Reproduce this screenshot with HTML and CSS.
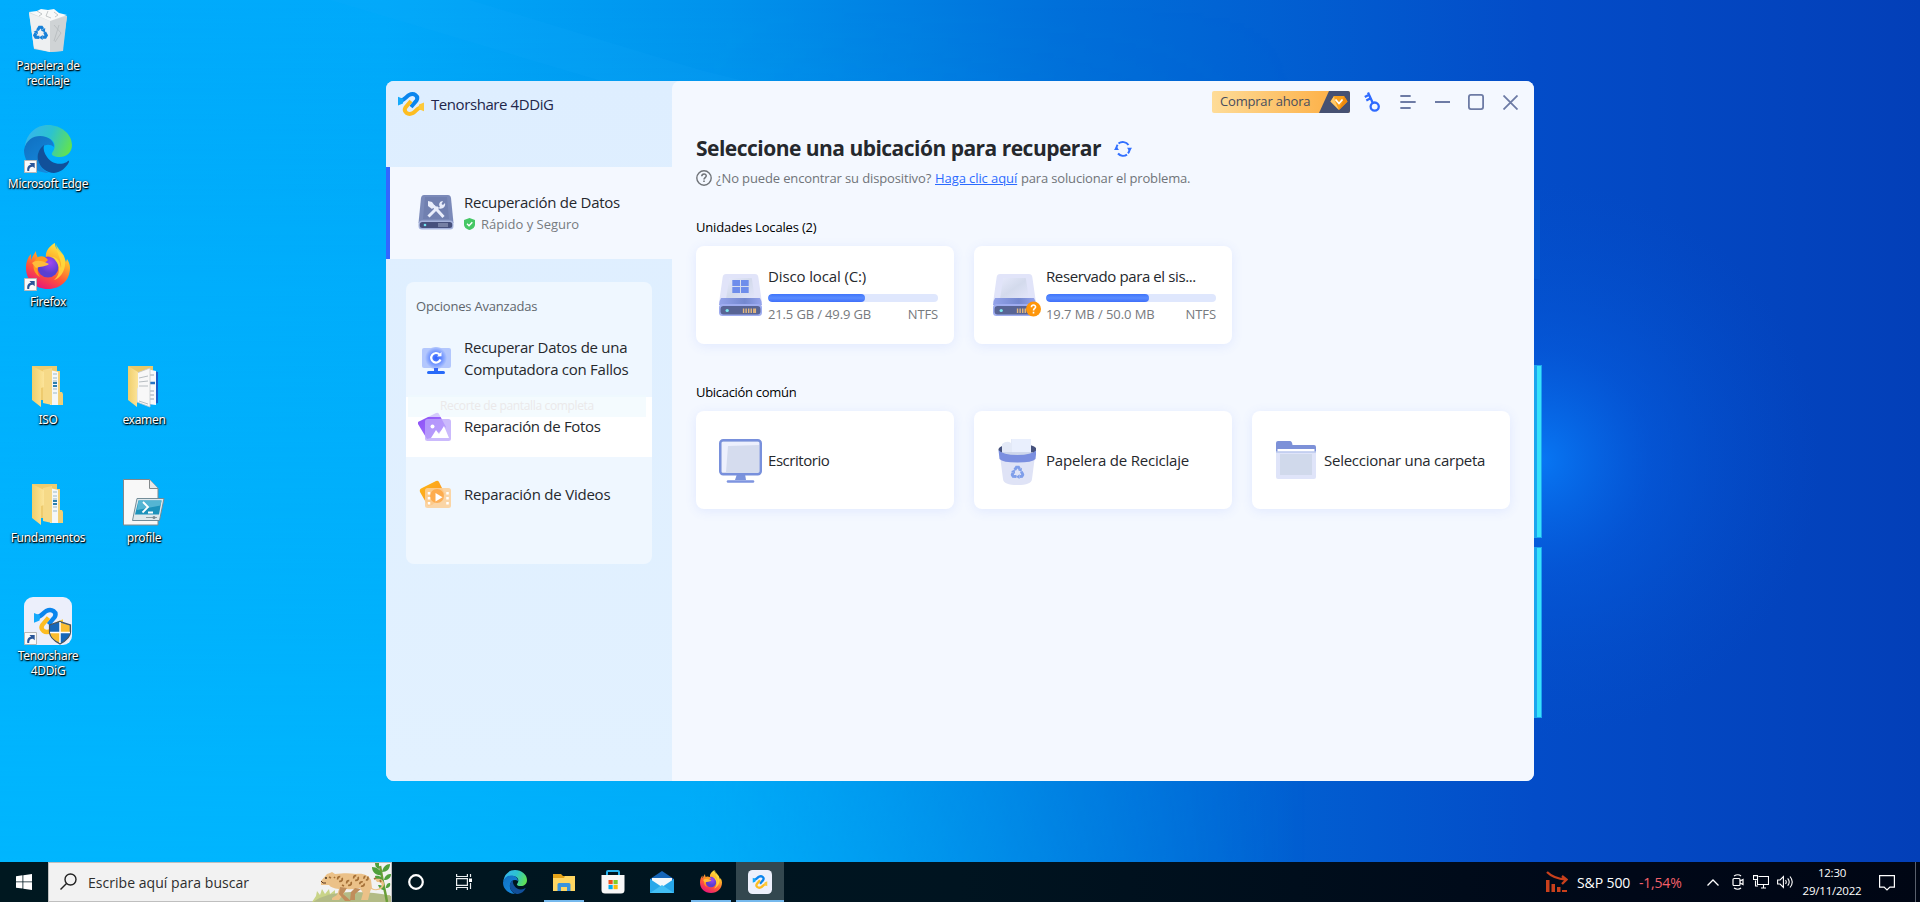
FILE: index.html
```html
<!DOCTYPE html>
<html lang="es">
<head>
<meta charset="utf-8">
<title>Escritorio</title>
<link rel="stylesheet" href="styles.css">
</head>
<body>
<svg class="defs" width="0" height="0" aria-hidden="true">
  <defs>
    <linearGradient id="edgeTop" x1="0" y1="0.3" x2="1" y2="0.6"><stop offset="0" stop-color="#36b5ef"/><stop offset=".5" stop-color="#2cc3cf"/><stop offset="1" stop-color="#62e250"/></linearGradient>
    <linearGradient id="edgeMid" x1="0" y1="0" x2=".6" y2="1"><stop offset="0" stop-color="#0f6fc0"/><stop offset="1" stop-color="#1688dc"/></linearGradient>
    <linearGradient id="ffBody" x1=".8" y1="0" x2=".3" y2="1"><stop offset="0" stop-color="#fff04a"/><stop offset=".35" stop-color="#ffb02a"/><stop offset=".65" stop-color="#ff5a36"/><stop offset="1" stop-color="#e8127c"/></linearGradient>
    <radialGradient id="ffGlobe" cx=".6" cy=".3"><stop offset="0" stop-color="#a048f0"/><stop offset="1" stop-color="#5a3fd0"/></radialGradient>
    <linearGradient id="fold" x1="0" x2="1"><stop offset="0" stop-color="#f0cf6c"/><stop offset="1" stop-color="#fce49a"/></linearGradient>
    <linearGradient id="drvTop" x1="0" y1="0" x2="1" y2="1"><stop offset="0" stop-color="#e6e9fb"/><stop offset=".5" stop-color="#d3daec"/><stop offset="1" stop-color="#e2e5fa"/></linearGradient>
    <linearGradient id="drvMid" x1="0" x2="1"><stop offset="0" stop-color="#94a3ea"/><stop offset=".6" stop-color="#7488cf"/><stop offset="1" stop-color="#96a4ec"/></linearGradient>
    <linearGradient id="violet" x1="0" y1="0" x2="1" y2="1"><stop offset="0" stop-color="#8a4df5"/><stop offset="1" stop-color="#a878ff"/></linearGradient>
    <linearGradient id="orange" x1="0" y1="0" x2="1" y2="1"><stop offset="0" stop-color="#fdb913"/><stop offset="1" stop-color="#fd8f2c"/></linearGradient>
    <radialGradient id="pcGlow"><stop offset="0" stop-color="#2f62ff"/><stop offset=".45" stop-color="#5e86ff"/><stop offset="1" stop-color="#b3c7fd"/></radialGradient>

    <symbol id="edge" viewBox="0 0 48 48">
      <path d="M1 22C2 9 12 0 24 0c13 0 24 9 24 20 0 8-6 12-12 12-6 0-9-2-8-4 3-4 3-7 2-10C27 11 10 8 1 22z" fill="url(#edgeTop)"/>
      <path d="M0 25C2 15 9 11 16 11c9 0 14 5 14 11-6-5-15-1-16 8-1 8 4 15 11 18C12 48 0 39 0 25z" fill="url(#edgeMid)"/>
      <path d="M20 20c-6 4-7 11-6 15 2 8 9 13 16 13 7-1 12-5 15-11 0-2-1-1-2 0-8 4-16 1-20-5-3-4-4-8-3-12z" fill="#11509a"/>
    </symbol>
    <symbol id="firefox" viewBox="0 0 48 48">
      <path d="M46 25c0 12-9 21-22 21S2 37 2 25c0-6 2-11 5-14v6c1-3 3-6 5-9 0 3 1 5 2 7l8-1c-1-5 3-11 9-14 0 5 3 8 7 11 2 2 3 5 4 8l1-3c2 3 3 6 3 9z" fill="url(#ffBody)"/>
      <circle cx="24" cy="24" r="10.500" fill="url(#ffGlobe)"/>
      <path d="M14 14c4-2 8 0 10 3l-1 1c-2 2-7 2-9 6-1 4 0 7 2 10-6-3-10-13-2-20z" fill="#ff9a1f"/>
      <path d="M8 20c4-3 9-3 17 1-3 3-9 2-13 4z" fill="#ffbd3a"/>
      <path d="M26 14c5-1 9 3 10 7l1 4c1-9-4-12-5-24 1 4 6 8 8 12 4 12-3 22-10 24 7-6 6-14 1-20-1-2-3-3-5-3z" fill="#ffdc3d" opacity=".85"/>
    </symbol>
    <symbol id="loop" viewBox="0 0 26 24">
      <path d="M1.500 8.300C6 9.500 8 4.500 11 3c5-2.500 10 1 7.500 5.500L13 15" fill="none" stroke="#0a85ee" stroke-width="4"/>
      <path d="M0 4.800 5.500 7 5 11.500 0 13.500z" fill="#14a9fb"/>
      <path d="M24.500 15.700C20 14.500 18 19.500 15 21c-5 2.500-10-1-7.500-5.500L13 9" fill="none" stroke="#fdbd22" stroke-width="4"/>
      <path d="M26 19.200 20.500 17l.5-4.500 5-2z" fill="#fdc93a"/>
    </symbol>
    <symbol id="shortcut" viewBox="0 0 13 13">
      <path d="M.5.500h12v12H.5z" fill="#fafafa" stroke="#b8b8b8"/>
      <path d="M3.300 11C2.800 7 4.500 5 7 4.800L5.500 3h5.200v5.200L9 6.700C6.500 6.500 5 8 5.200 11z" fill="#2a5699"/>
    </symbol>
    <symbol id="recycle" viewBox="0 0 20 20">
      <g fill="none" stroke="currentColor" stroke-width="4.200">
        <path d="M6 7 8.600 3h2.800l1.600 2.600"/>
        <path d="M6 7 8.600 3h2.800l1.600 2.600" transform="rotate(120 10 11)"/>
        <path d="M6 7 8.600 3h2.800l1.600 2.600" transform="rotate(240 10 11)"/>
      </g>
      <g fill="currentColor">
        <path d="m10.500 7.200 5.800-3.200-.4 6z"/>
        <path d="m10.500 7.200 5.800-3.200-.4 6z" transform="rotate(120 10 11)"/>
        <path d="m10.500 7.200 5.800-3.200-.4 6z" transform="rotate(240 10 11)"/>
      </g>
    </symbol>
    <symbol id="folder" viewBox="0 0 48 48">
      <path d="M8 5h25v34H12z" fill="#eecb6e"/>
      <path d="M28 10h8v24l3 2v8h-9z" fill="#f3d27a"/>
      <path d="m26 9 8 2v33h-8z" fill="#f4f7f8"/>
      <path d="M29 13h4m-4 4h4m-4 3h4m-4 8h4m-4 4h4" stroke="#9bb9c8"/>
      <path d="M29 22h4m-4 3h4" stroke="#2b7fae" stroke-width="2"/>
      <path d="m19 9 9-2v37l-9-2z" fill="#f6d987"/>
      <path d="m8 5 12 6v15l-3 1v19L8 39z" fill="url(#fold)"/>
      <path d="M36 31h2l1 2v11h-4V33z" fill="#f1cf76"/>
    </symbol>
    <symbol id="drive" viewBox="0 0 42 42">
      <path d="M7 0h28q3 0 3.400 3L42 29H0L3.600 3Q4 0 7 0z" fill="#e1e4f9"/>
      <path d="M10 4h22l3 20H7z" fill="url(#drvTop)"/>
      <path d="M2 24h38q2 3 2 7H0q0-4 2-7z" fill="url(#drvMid)"/>
      <rect y="30" width="42" height="12" rx="3.500" fill="#9eacef"/>
      <rect x="1.500" y="32" width="39" height="8.500" rx="3" fill="#586494"/>
      <circle cx="8" cy="36.500" r="1.600" fill="#7ce8ee"/>
      <path d="M24 34.500v4.500m2.500-4.500v4.500m2.500-4.500v4.500m2.500-4.500v4.500m2.500-4.500v4.500m1.500-4.500v4.500" stroke="#e3b77e" stroke-width="1.400"/>
    </symbol>
  </defs>
</svg>

<div class="screen">
  <svg class="wallpaper" viewBox="0 0 1920 902" preserveAspectRatio="none" aria-hidden="true">
    <defs>
      <linearGradient id="wpBase" x1="0" y1="0" x2="1" y2="0">
        <stop offset="0" stop-color="#00adfd"/><stop offset=".2" stop-color="#00a9fa"/><stop offset=".38" stop-color="#0092ec"/><stop offset=".55" stop-color="#0070da"/><stop offset=".8" stop-color="#034cc8"/><stop offset="1" stop-color="#033fb8"/>
      </linearGradient>
      <linearGradient id="wpLow" x1="0" y1="0" x2="0" y2="1">
        <stop offset="0" stop-color="#00baff" stop-opacity="0"/><stop offset="1" stop-color="#00baff" stop-opacity=".7"/>
      </linearGradient>
      <linearGradient id="wpMaskG" x1="0" y1="0" x2="1" y2="0"><stop offset="0" stop-color="#fff"/><stop offset=".36" stop-color="#fff"/><stop offset=".68" stop-color="#000"/></linearGradient>
      <mask id="wpMask"><path d="M0 0h1920v902H0z" fill="url(#wpMaskG)"/></mask>
      <radialGradient id="wpGlow" gradientUnits="userSpaceOnUse" cx="1540" cy="460" r="280"><stop offset="0" stop-color="#0879f6" stop-opacity=".95"/><stop offset=".4" stop-color="#065fe2" stop-opacity=".5"/><stop offset="1" stop-color="#0450cc" stop-opacity="0"/></radialGradient>
    </defs>
    <path d="M0 0h1920v902H0z" fill="url(#wpBase)"/>
    <path d="M0 0h1920v902H0z" fill="url(#wpLow)" mask="url(#wpMask)"/>
    <path d="M330 0 1000 200h540v80L700 70 470 0z" fill="#1bb0ff" opacity=".1"/>
    <path d="M1534 0h386v902h-386z" fill="url(#wpGlow)"/>
    <path d="M1534 365h8v173h-8zM1534 547h8v171h-8z" fill="#1ca6ee"/>
    <path d="M1537 366h4v171h-4zM1537 548h4v169h-4z" fill="#38e2fb"/>
  </svg>

  <main class="desktop">
    <div class="shortcuts">
      <div class="shortcut r1">
        <svg viewBox="0 0 48 48"><path d="m5 5 38 4-5 35-12 1-16-3z" fill="#d9dcde"/><path d="m5 6 21 8v31l-16-4z" fill="#eef0f1"/><path d="m26 14 17-5-4 35-13 1z" fill="#cfd3d5"/><path d="m5 5 8-1 4-2 7 1 6-1 5 4 8 2-17 6z" fill="#f8f9f9"/><path d="m13 4 5 3-3 2m9-5-2 5 5 2m3-6 4 3-3 2m-1 8 7 8-6 9m4-17-5 16" fill="none" stroke="#b5babd" stroke-width=".8"/><svg x="9" y="18" width="15" height="15" viewBox="0 0 20 20" color="#1680d8"><use href="#recycle"/></svg></svg>
        <span class="label">Papelera de<br>reciclaje</span>
      </div>
      <div class="shortcut r2">
        <svg viewBox="0 0 48 48"><use href="#edge"/><use href="#shortcut" y="35" width="13" height="13"/></svg>
        <span class="label">Microsoft Edge</span>
      </div>
      <div class="shortcut r3">
        <svg viewBox="0 0 48 48"><use href="#firefox"/><use href="#shortcut" y="35" width="13" height="13"/></svg>
        <span class="label">Firefox</span>
      </div>
      <div class="shortcut r4">
        <svg viewBox="0 0 48 48"><use href="#folder"/></svg>
        <span class="label">ISO</span>
      </div>
      <div class="shortcut r5">
        <svg viewBox="0 0 48 48"><use href="#folder"/></svg>
        <span class="label">Fundamentos</span>
      </div>
      <div class="shortcut r6">
        <svg viewBox="0 0 48 48"><rect width="48" height="48" rx="9" fill="#eceffb"/><use href="#loop" x="10" y="10" width="29" height="28"/><path d="M36 24.500 46.500 28v7c0 5-5 9-10.500 12-5.500-3-10.500-7-10.500-12v-7z" fill="#1767b8" stroke="#49545e" stroke-width="1.200"/><path d="M36 35.500h9.700V28.500L36 25.500zM36 35.500v10.500C30 43 26.500 40 26.300 35.500z" fill="#fbbd2f"/><path d="M36 25v21M26 35.500h20" stroke="#fff" stroke-width="1.500"/><use href="#shortcut" y="35" width="13" height="13"/></svg>
        <span class="label">Tenorshare<br>4DDiG</span>
      </div>
      <div class="shortcut col2 r4">
        <svg viewBox="0 0 48 48"><path d="M8 5h25v34H12z" fill="#e9c869"/><path d="m29 9 9 2v31l-9 2z" fill="#1a5dc8"/><path d="m27 8 9 2v34l-9-1z" fill="#f7f9fb"/><path d="M30 14h4m-4 16h4m-4 4h4m-4 4h4" stroke="#98a5b5"/><path d="M30 22h5" stroke="#2673c4" stroke-width="2.500"/><path d="m17 12 13-5v39l-13-5z" fill="#f8f8f8" stroke="#c5c9cb" stroke-width=".8"/><path d="m19 17 9-2m-9 6 9-1m-9 5h9m-9 15 9 3" stroke="#a6adb2" stroke-width=".8"/><path d="m8 5 10 6v15l-1 2v18L8 39z" fill="url(#fold)"/></svg>
        <span class="label">examen</span>
      </div>
      <div class="shortcut col2 r5">
        <svg viewBox="0 0 48 48"><path d="M3.500.500h26l8.500 9v36.500H3.500z" fill="#f8f8f8" stroke="#83888b"/><path d="M29.500.500V9.500H38" fill="#e8e8e8" stroke="#83888b"/><path d="M17 19.500h27l-4.500 22H12.500z" fill="#dfe8ec" stroke="#728c98"/><path d="M18.500 21.500h23L39 35.500H15z" fill="#1c92bb"/><path d="M18.500 21.500h23l-1 5L17 31z" fill="#54b5d3"/><path d="m23 23 5 5-5.500 5.500m5.500 0h5" fill="none" stroke="#fff" stroke-width="1.800"/><path d="M26 38.500h11" stroke="#8c9ba2"/><circle cx="34" cy="38.500" r="1.500" fill="#788a92"/></svg>
        <span class="label">profile</span>
      </div>
    </div>

    <section class="app">
      <aside class="side">
        <header class="brand"><svg class="brand-logo" viewBox="0 0 26 24"><use href="#loop"/></svg><span class="brand-name">Tenorshare 4DDiG</span></header>
        <div class="side-main">
          <svg class="side-ic" viewBox="0 0 36 36"><path d="M6 1h24q2.500 0 3 3l2.500 25H.5L3 4q.5-3 3-3z" fill="#7b8ab9"/><path d="M7 3h22l2 22H5z" fill="#7180b0"/><rect x=".5" y="26.500" width="35" height="9" rx="3.500" fill="#a6b3dc"/><rect x="1.800" y="28" width="32.400" height="6" rx="2.500" fill="#46507c"/><circle cx="7" cy="31" r="1.300" fill="#6fe3ee"/><path d="M21 29v4m2-4v4m2-4v4m2-4v4m2-4v4" stroke="#a5aeca"/><path d="m10.500 22.500 9.500-9.500M15.500 12l10 11" stroke="#e9edfb" stroke-width="3"/><path d="M27 9c1 4-3 7-7 5l2-1c-2-3 0-6 3-6l-1.500 3 1.500 1z" fill="#e9edfb"/><path d="m10 7 4 1 3 4-3 3-4-3z" fill="#e9edfb"/></svg>
          <div><div class="t16">Recuperación de Datos</div>
          <div class="side-sub"><svg width="11" height="12" viewBox="0 0 11 12"><path d="M5.500 0 11 2v4.500C11 9.500 8 11.500 5.500 12 3 11.500 0 9.500 0 6.500V2z" fill="#45c765"/><path d="m3 5.800 2 2L8.300 4.300" fill="none" stroke="#fff" stroke-width="1.400"/></svg><span>Rápido y Seguro</span></div></div>
        </div>
        <div class="adv">
          <div class="adv-head">Opciones Avanzadas</div>
          <div class="adv-row tall">
            <svg viewBox="0 0 36 32"><rect x="4" y="4" width="29" height="20" rx="2" fill="#b3c7fd"/><circle cx="18" cy="14" r="11" fill="url(#pcGlow)"/><path d="M16 24h4v4h-4z" fill="#3465f5"/><path d="M10.500 28.500h15" stroke="#276af9" stroke-width="3" stroke-linecap="round"/><path d="M21.500 10.500a4.800 4.800 0 1 0 1 5" fill="none" stroke="#fff" stroke-width="2.200"/><path d="m19 12.500 4.500-.2V8z" fill="#fff"/></svg>
            <span class="t16">Recuperar Datos de una<br>Computadora con Fallos</span>
          </div>
          <div class="adv-row active">
            <svg viewBox="0 0 36 32"><path d="m2 10 16-8q2-1 3 1l7 13-15 11-4 1L0 13q-1-2 2-3z" fill="url(#violet)"/><rect x="7" y="8" width="26" height="22" rx="2.500" fill="#bda6fb" opacity=".78"/><circle cx="14.500" cy="15.500" r="2" fill="#fff"/><path d="m13 27 5-8 3 4 5-8 5 12z" fill="#fff"/></svg>
            <span class="t16 fotos">Reparación de Fotos</span>
            <div class="ghost">Recorte de pantalla completa</div>
          </div>
          <div class="adv-row last">
            <svg viewBox="0 0 36 32"><path d="m4 10 14-7q2-1 3 1l6 12-13 11-4 1L2 14q-1-3 2-4z" fill="url(#orange)"/><rect x="7" y="10" width="26" height="20" rx="2.500" fill="#fcd09a" opacity=".88"/><circle cx="19" cy="18" r="7" fill="#fd9b2e" opacity=".65"/><path d="m17.500 15 7 4.200-7 4.300z" fill="#fff"/><path d="M11 14v13M29.500 14v13" stroke="#fff" stroke-width="2.500" stroke-dasharray="2.500 2.500"/></svg>
            <span class="t16 videos">Reparación de Videos</span>
          </div>
        </div>
      </aside>

      <div class="content">
        <div class="titlebar">
          <div class="buy"><span>Comprar ahora</span>
            <svg width="31" height="22" viewBox="0 0 31 22"><path d="M10 0h21v22H0z" fill="#465172"/><path d="m15 5h10l3.500 5.500L20 19l-8.500-8.500z" fill="#f9a01c"/><path d="m15 5-3.500 5.500L20 19l-4-9z" fill="#ffc96a"/><path d="m25 5 3.500 5.500L20 19l4-9z" fill="#f08a0c"/><path d="m16.500 8.500 3.500 4 3.500-4" fill="none" stroke="#fff" stroke-width="1.800"/></svg>
          </div>
          <svg class="b-key" width="18" height="20" viewBox="0 0 18 20" fill="none" stroke="#2f6bff" stroke-width="2.300"><circle cx="10.700" cy="14.600" r="4.100"/><path d="M8.800 11 4 .5M6.500 6.300 2.300 8.500M5 2.800.800 5"/></svg>
          <svg class="b-menu" width="16" height="14" viewBox="0 0 16 14" stroke="#6d7ba5" stroke-width="1.800" stroke-linecap="round"><path d="M1 1h9M1 7h14M1 13h9"/></svg>
          <svg class="b-min" width="15" height="2"><path d="M0 1h15" stroke="#6d7ba5" stroke-width="1.800"/></svg>
          <svg class="b-max" width="16" height="16" fill="none" stroke="#6d7ba5" stroke-width="1.800"><rect x=".9" y=".9" width="14.200" height="14.200" rx="2"/></svg>
          <svg class="b-close" width="15" height="15" stroke="#6d7ba5" stroke-width="1.800"><path d="m.5.500 14 14m0-14-14 14"/></svg>
        </div>
        <h1 class="title"><span>Seleccione una ubicación para recuperar</span>
          <svg width="18" height="16" viewBox="0 0 18 16" fill="none" stroke="#3370ff" stroke-width="2"><path d="M4.500 2.500A7 7 0 0 1 14.500 4M15.600 8a7 7 0 0 1-1.600 4.300M13 13.600a7 7 0 0 1-9-1.100M2.400 8.500A7 7 0 0 1 3.600 3.800"/><path d="M18 6.800h-5l2.700 3.800zM0 9h5L2.300 5.200z" fill="#3370ff" stroke="none"/></svg></h1>
        <p class="hint"><svg width="16" height="16" viewBox="0 0 16 16" fill="none" stroke="#707479" stroke-width="1.400"><circle cx="8" cy="8" r="7.200"/><path d="M5.800 6.300C5.900 3.200 10.400 3.400 10.200 6 10.100 7.500 8 7.600 8 9.400M8 10.500V12" stroke-width="1.600"/></svg><span class="h1t">¿No puede encontrar su dispositivo?</span><a class="h2t">Haga clic aquí</a><span class="h3t">para solucionar el problema.</span></p>

        <h2 class="group g1">Unidades Locales (2)</h2>
        <div class="cards">
          <div class="card">
            <svg class="cic" viewBox="0 0 42 42" preserveAspectRatio="none"><use href="#drive"/><path d="M13 6h7.500v6H13zm8.500 0H29v6h-7.500zM13 13h7.500v6H13zm8.500 0H29v6h-7.500z" fill="#6e8deb"/></svg>
            <div class="info"><div class="t16 disco">Disco local (C:)</div><div class="bar"><i style="width:57%"></i></div><div class="meta"><span>21.5 GB / 49.9 GB</span><span>NTFS</span></div></div>
          </div>
          <div class="card shifted">
            <svg class="cic" viewBox="0 0 42 42" preserveAspectRatio="none"><use href="#drive"/></svg>
            <svg class="badge" viewBox="0 0 16 16"><circle cx="8" cy="8" r="8" fill="#fe960b"/><path d="M5.800 6C5.800 3 10.300 3.200 10.200 5.800 10.100 7.300 8 7.500 8 9.500M8 11V12.700" fill="none" stroke="#fff" stroke-width="1.700"/></svg>
            <div class="info"><div class="t16 reserv">Reservado para el sis...</div><div class="bar"><i style="width:60.500%"></i></div><div class="meta mb"><span>19.7 MB / 50.0 MB</span><span>NTFS</span></div></div>
          </div>
        </div>

        <h2 class="group g2">Ubicación común</h2>
        <div class="cards">
          <div class="card">
            <svg class="cic loc" viewBox="0 0 43 46"><path d="M18 35h8l1 6H16z" fill="#7b93dc"/><rect x="1.200" y="1.200" width="40.600" height="34" rx="3" fill="#d5dcee" stroke="#7890dc" stroke-width="2.400"/><path d="M3 3h37v3L9 7 7 33H3z" fill="#edf0fd"/><path d="M9 42.500h25" stroke="#7e94e0" stroke-width="2.600" stroke-linecap="round"/></svg>
            <span class="t16 escr">Escritorio</span>
          </div>
          <div class="card shifted">
            <svg class="cic loc" viewBox="0 0 43 46"><ellipse cx="24.500" cy="10.500" rx="19" ry="6" fill="#46527d"/><path d="M9 5q5-4 9-1V0l20 .5v17H9z" fill="#e3e9f7"/><path d="M19 0h19v14H19z" fill="#e9effd"/><path d="M7 17h35l-3 23q-.5 6-14.500 6T10 40z" fill="#dfe3f6"/><path d="M9 13h31v4H9z" fill="#c5cfe6" opacity=".7"/><path d="M5.500 11q4 5 19 5t19-5l-1 9q-3 3.500-18 3.500t-18-3.500z" fill="#7b8fe0"/><svg x="17.500" y="26" width="14" height="14" viewBox="0 0 20 20" color="#7f9eea"><use href="#recycle"/></svg></svg>
            <span class="t16 pap">Papelera de Reciclaje</span>
          </div>
          <div class="card">
            <svg class="cic loc" viewBox="0 0 43 46"><path d="M1 4q0-2 2-2h12q2 0 2.500 4H39q2 0 2 2v8H1z" fill="#7d91d8"/><path d="M2.500 10h37v5h-37z" fill="#fff"/><path d="M1 12.500h40V38q0 2-2 2H3q-2 0-2-2z" fill="#dfe4f9"/><path d="M5 15h32v21H5z" fill="#d0d9eb"/><path d="M1 13h40" stroke="#a7b9e7" stroke-width="1.200"/></svg>
            <span class="t16">Seleccionar una carpeta</span>
          </div>
        </div>
      </div>
    </section>
  </main>

  <footer class="taskbar">
    <div class="start"><svg width="16" height="16" viewBox="0 0 16 16" fill="#fff"><path d="M0 2.200 6.500 1.300v6.200H0zM7.300 1.200 16 0v7.500H7.300zM0 8.300h6.500v6.300L0 13.700zM7.300 8.300H16V16l-8.700-1.200z"/></svg></div>
    <div class="search">
      <svg class="lens" width="17" height="17" viewBox="0 0 17 17" fill="none" stroke="#222" stroke-width="1.400"><circle cx="10.500" cy="6.500" r="5.500"/><path d="M6.500 10.500.500 16.500"/></svg>
      <span class="search-t">Escribe aquí para buscar</span>
      <svg class="leopard" width="79" height="39" viewBox="0 0 79 39">
        <path d="M0 39 4 33l1-5 3 4 2-6 3 5 4-5 1 5 5-4v5h55v7z" fill="#c9d488"/><path d="M1 39q14-10 38-10 26 0 40 4v6z" fill="#b3bb86"/>
        <path d="M75 39c-2-12-4-18-5-25L68 3" fill="none" stroke="#6b9d38" stroke-width="2.500"/>
        <path d="M70 12C64 13 60 9 60 4c5 0 9 3 10 8zM70 9c1-5 4-8 8-8 0 5-3 8-8 8zM72 19c-5 0-9-3-9-6 5-1 8 2 9 6zM72 17c1-5 4-6 7-6 0 4-3 6-7 6zM73 27c-4 0-6-2-7-5 4 0 7 1 7 5zM74 25c0-4 2-5 4-5 1 3-1 5-4 5zM67 6c-3-1-4-3-4-6h4z" fill="#4fa03c"/>
        <path d="M9 18 15 11l3-1 2-1 3 2c9-1 14-1 21 0 8-1 13 2 15 6l1 8q4 3 9-1c2-3 0-5-4-5l-2-3c6-1 9 1 9 5 0 5-7 8-13 5l-1 3-2 8h-7l2-7-3-5q-6 2-14 1l-3 6-4 5h-7v-2l5-3 2-6q-8-1-10-4l-3 0-5 0z" fill="#ebc188"/>
        <path d="m35 25-4 6 8 7h-6l-6-7 1-7zm14 1-6 5v6h-5l1-8 4-4z" fill="#c08d5b"/>
        <g fill="none" stroke="#a46f36" stroke-width="1.700"><circle cx="28" cy="16" r="2.300" stroke-dasharray="4 2"/><circle cx="37" cy="20" r="2.300" stroke-dasharray="4 2"/><circle cx="44" cy="15" r="2.300" stroke-dasharray="4 2"/><circle cx="50" cy="21" r="2.200" stroke-dasharray="4 2"/><circle cx="54" cy="15" r="2" stroke-dasharray="3 2"/><path d="m17 14 2 1m3-1 1 1m7 7 2 1m30-7 2-1m4 2 1 2"/></g>
        <circle cx="14" cy="15" r=".9" fill="#2d2018"/><path d="m9 18 2 2h3" stroke="#59351f" fill="none"/>
      </svg>
    </div>
    <div class="tb sys"><svg width="16" height="16" fill="none" stroke="#fff" stroke-width="2.200"><circle cx="8" cy="8" r="6.800"/></svg></div>
    <div class="tb sys"><svg width="16" height="16" viewBox="0 0 16 16" fill="none" stroke="#e9edef" stroke-width="1.200"><path d="M.600 0v2.500h10.800V0M.600 16v-2.500h10.800V16M.600 4.600h10.800v6.800H.6zM14.500 0v3M14.500 9v6"/><path d="M13 4.500h3V8h-3z" fill="#fff" stroke="none"/></svg></div>
    <div class="tb gap"><svg width="24" height="24" viewBox="0 0 48 48"><use href="#edge"/></svg></div>
    <div class="tb open"><svg width="22" height="19" viewBox="0 0 22 19"><path d="M0 1h8l2 2h11v5H0z" fill="#e6a318"/><path d="M0 5h11l1-2h10v15H0z" fill="#ffd662"/><path d="M4.500 18v-6.500q0-1.500 1.500-1.500h10q1.500 0 1.500 1.500V18H14v-4H8v4z" fill="#3a94df"/></svg></div>
    <div class="tb"><svg width="24" height="24" viewBox="0 0 24 24"><path d="M6 6V2q0-1 1-1h10q1 0 1 1v4" fill="none" stroke="#24b1ed" stroke-width="2"/><path d="M.500 5h23v15q0 3.500-3.500 3.500H4Q.5 23.500.5 20z" fill="#f7f7f7"/><path d="M7.500 10h4.200v4.200H7.500z" fill="#f1511b"/><path d="M12.500 10h4.200v4.200h-4.200z" fill="#80cc28"/><path d="M7.500 15h4.200v4.200H7.500z" fill="#00adef"/><path d="M12.500 15h4.200v4.200h-4.200z" fill="#fbbc09"/></svg></div>
    <div class="tb"><svg width="24" height="22" viewBox="0 0 24 22"><path d="M0 8 12 0l12 8v5H0z" fill="#1565b8"/><path d="M2 7h20v9H2z" fill="#f4f8fb"/><path d="m0 8 12 8 12-8v14H0z" fill="#28a8ea"/><path d="m0 22 12-8 12 8z" fill="#42bff5"/></svg></div>
    <div class="tb open"><svg width="24" height="24" viewBox="0 0 48 48"><use href="#firefox"/></svg></div>
    <div class="tb current"><svg width="24" height="24" viewBox="0 0 24 24"><rect width="24" height="24" rx="4.500" fill="#edf0fc"/><use href="#loop" x="4.500" y="5" width="15" height="14"/></svg></div>
    <div class="news"><svg width="22" height="22" viewBox="0 0 22 22"><path d="M1 1C6 6 12 8 20 8.500M16 5l4.500 3.500L16 13" fill="none" stroke="#c9401c" stroke-width="2.300"/><path d="M0 9h3.500v12H0zM5.500 13H9v8H5.500zM11 16h3.500v5H11zM16 19h5v2h-5z" fill="#c9401c"/></svg><span class="sp">S&amp;P 500</span><span class="pct">-1,54%</span></div>
    <div class="tray">
      <svg class="chev" width="12" height="7" fill="none" stroke="#fff" stroke-width="1.300"><path d="m.5 6.500 5.500-5.500 5.500 5.500"/></svg>
      <svg class="cam" width="12" height="16" viewBox="0 0 12 16" fill="none" stroke="#fff" stroke-width="1.200"><rect x="1" y="4.500" width="7" height="7" rx="1"/><path d="m8 7 3-1.500v5L8 9M2 2q4-2.500 7 0M2 14q4 2.500 7 0"/></svg>
      <svg class="net" width="16" height="14" viewBox="0 0 16 14" fill="none" stroke="#fff" stroke-width="1.100"><path d="M5.500 1.500h10v8H4.500V5M8 13h5M10.500 10v3M2.500 5.500V11H5M.500.600h4V4.500h-4z"/></svg>
      <svg class="vol" width="17" height="14" viewBox="0 0 17 14" fill="none" stroke="#fff" stroke-width="1.100"><path d="M.6 5h2.500l3.300-3.300v10.600L3.100 9H.6zM8.500 5q1.500 2 0 4M10.700 3.300q3 3.700 0 7.400M13 1.500q4.500 5.500 0 11"/></svg>
      <div class="clock"><span>12:30</span><span>29/11/2022</span></div>
      <svg class="note" width="16" height="16" viewBox="0 0 16 16" fill="none" stroke="#fff" stroke-width="1.200"><path d="M.600.600h14.800v11.500h-4.500L8 15l-2.900-2.900H.6z"/></svg>
      <i class="peek"></i>
    </div>
  </footer>
</div>
</body>
</html>
```
FILE: styles.css
```css
* { box-sizing: border-box; }
body { margin: 0; font-family: "Open Sans", "Noto Sans", sans-serif; overflow: hidden; }
svg { display: block; flex: none; }
.defs { position: absolute; }
.screen { position: relative; width: 1920px; height: 902px; display: flex; flex-direction: column; overflow: hidden; }
.wallpaper { position: absolute; inset: 0; width: 1920px; height: 902px; }
.desktop { position: relative; height: 862px; flex: none; }

/* desktop shortcuts */
.shortcuts { display: grid; grid-template: repeat(6, 118px) / 96px 96px; width: 192px; }
.shortcut { padding-top: 7px; display: flex; flex-direction: column; align-items: center; }
.shortcut > svg { width: 48px; height: 48px; }
.r1 { grid-row: 1; } .r2 { grid-row: 2; } .r3 { grid-row: 3; }
.r4 { grid-row: 4; } .r5 { grid-row: 5; } .r6 { grid-row: 6; }
.col2 { grid-column: 2; }
.label { margin-top: 3px; font: 12px/15px "Noto Sans", sans-serif; letter-spacing: -.3px; color: #fff; text-align: center; white-space: nowrap; text-shadow: 1px 1px 1px #000, 0 1px 2px rgba(0,0,0,.8), 0 0 2px rgba(0,0,0,.5); }

/* application window */
.app { position: absolute; left: 386px; top: 81px; width: 1148px; height: 700px; display: flex; border-radius: 8px; overflow: hidden; background: #deefff; }
.side { width: 286px; background: linear-gradient(#deeeff, #e2f1ff); }
.brand { height: 86px; padding: 11px 0 0 12px; display: flex; align-items: flex-start; gap: 7px; }
.brand-logo { width: 26px; height: 24px; }
.brand-name { font-size: 15px; line-height: 24px; color: #22264a; white-space: nowrap; letter-spacing: -.42px; }
.side-main { height: 92px; border-left: 4px solid #3366ff; background: #f4f8ff; padding: 24px 0 0 28px; display: flex; gap: 10px; }
.side-ic { width: 36px; height: 36px; margin-top: 3px; }
.t16 { font-size: 15px; line-height: 22px; color: #25282d; white-space: nowrap; letter-spacing: -.26px; }
.side-sub { display: flex; align-items: center; gap: 6px; height: 21px; font-size: 13px; color: #777b80; white-space: nowrap; }
.adv { width: 246px; height: 282px; margin: 23px 0 0 20px; border-radius: 8px; background: #eff7ff; }
.adv-head { height: 50px; padding: 14px 0 0 10px; font-size: 13px; line-height: 20px; color: #60666d; letter-spacing: -.2px; }
.adv-row { display: flex; align-items: center; gap: 10px; padding-left: 12px; height: 60px; position: relative; }
.adv-row > svg { width: 36px; height: 32px; }
.adv-row.tall { height: 65px; padding-bottom: 14px; }
.adv-row.tall > svg { margin-top: 5px; }
.adv-row.active { background: #fff; }
.adv-row.active > .t16 { margin-bottom: 2px; }
.adv-row.last { margin-top: 7px; }
.fotos { letter-spacing: -.31px; }
.videos { letter-spacing: -.22px; }
.ghost { position: absolute; left: 2px; top: -2px; width: 238px; height: 22px; padding-left: 32px; background: rgba(240,249,253,.7); color: #ebe9ea; font-size: 12px; line-height: 22px; white-space: nowrap; letter-spacing: -.35px; }

.content { width: 862px; background: #f4f8ff; border-radius: 8px 0 0 0; padding: 10px 16px 0 24px; }
.titlebar { height: 22px; display: flex; align-items: center; justify-content: flex-end; }
.buy { width: 138px; height: 22px; display: flex; justify-content: space-between; background: linear-gradient(90deg, #fedc98, #fdb44e 80%); padding-left: 8px; border-radius: 2px; font-size: 13px; line-height: 21px; color: #474d5e; overflow: hidden; white-space: nowrap; letter-spacing: -.19px; }
.buy svg { margin-left: -8px; }
.b-key { margin: 0 18px 0 14px; }
.b-menu { margin-right: 19px; }
.b-min { margin-right: 18px; }
.b-max { margin-right: 19px; }
.title { margin: 19px 0 0; height: 32px; display: flex; align-items: center; gap: 13px; font-size: 21px; line-height: 32px; color: #25282d; white-space: nowrap; }
.title span { letter-spacing: -.52px; }
.title svg { margin-top: 2px; }
.hint { margin: 3px 0 0; height: 22px; display: flex; align-items: center; font-size: 13px; color: #707479; white-space: nowrap; letter-spacing: -.13px; }
.h1t { margin-left: 4px; width: 215px; }
.h2t { margin-left: 4px; width: 82px; color: #2b6bff; text-decoration: underline; letter-spacing: -.08px; }
.h3t { margin-left: 4px; letter-spacing: -.16px; }
.group { margin: 0; font-size: 13px; font-weight: 400; line-height: 20px; color: #000; white-space: nowrap; }
.g1 { margin-top: 28px; letter-spacing: -.18px; }
.g2 { margin-top: 38px; letter-spacing: -.3px; }
.cards { display: grid; grid-template-columns: repeat(3, 258px); gap: 20px; margin-top: 9px; }
.card { position: relative; height: 98px; background: #fff; border-radius: 8px; box-shadow: 0 2px 12px rgba(70,110,255,.11); display: flex; gap: 6px; padding-left: 23px; align-items: flex-start; }
.card.shifted { padding-left: 19px; gap: 10px; }
.cic { width: 43px; height: 42px; margin-top: 28px; }
.cic.loc { height: 46px; }
.badge { position: absolute; left: 52px; top: 55px; width: 15px; height: 16px; }
.info { margin: 19px 0 0; width: 170px; }
.bar { height: 8px; margin-top: 7px; border-radius: 4px; background: #dfe7fd; overflow: hidden; }
.bar i { display: block; height: 8px; border-radius: 4px; background: linear-gradient(#3f75fb, #5a8cff 50%, #3f6ffa); }
.meta { display: flex; justify-content: space-between; margin-top: 2px; font-size: 13px; line-height: 20px; color: #777a7e; white-space: nowrap; letter-spacing: -.14px; }
.meta.mb { letter-spacing: -.07px; }
.card > .t16 { margin-top: 38px; }
.disco { letter-spacing: -.13px; }
.reserv { letter-spacing: -.39px; }
.escr { letter-spacing: -.45px; }
.pap { letter-spacing: -.2px; }

/* taskbar */
.taskbar { position: relative; height: 40px; flex: none; display: flex; align-items: stretch; background: linear-gradient(90deg, #001820, #001420 50%, #000818 85%, #000614); }
.start { width: 48px; display: grid; place-items: center; }
.search { width: 344px; border: 1px solid #bfbfbf; background: #f2f2f2; display: flex; align-items: center; padding-left: 11px; }
.search-t { margin-left: 11px; font-size: 14px; color: #2d2d2d; white-space: nowrap; width: 224px; letter-spacing: .04px; }
.leopard { height: 39px; }
.lens { margin-top: -2px; }
.tb { width: 49px; display: flex; justify-content: center; align-items: center; position: relative; }
.tb.sys { width: 48px; }
.tb.gap { margin-left: 2px; }
.tb.open::after { content: ""; position: absolute; left: 5px; bottom: 0; width: 40px; height: 2px; background: #76b9ed; }
.tb.current { width: 48px; margin-left: 1px; background: #33474f; border-bottom: 2px solid #76b9ed; padding-top: 2px; }
.news { margin-left: 762px; width: 161px; display: flex; align-items: center; color: #fff; font-size: 14px; white-space: nowrap; }
.sp { margin-left: 9px; width: 62px; letter-spacing: -.1px; }
.pct { color: #f4606a; letter-spacing: -.2px; }
.tray { width: 213px; display: flex; align-items: center; }
.cam { margin-left: 13px; } .net { margin-left: 9px; } .vol { margin-left: 8px; }
.clock { margin-left: 8px; width: 60px; display: flex; flex-direction: column; align-items: center; color: #fff; font-size: 11.5px; line-height: 18px; white-space: nowrap; letter-spacing: -.22px; }
.note { margin-left: 17px; margin-top: 2px; }
.peek { width: 1px; height: 40px; margin-left: 20px; background: #59606c; }
```
